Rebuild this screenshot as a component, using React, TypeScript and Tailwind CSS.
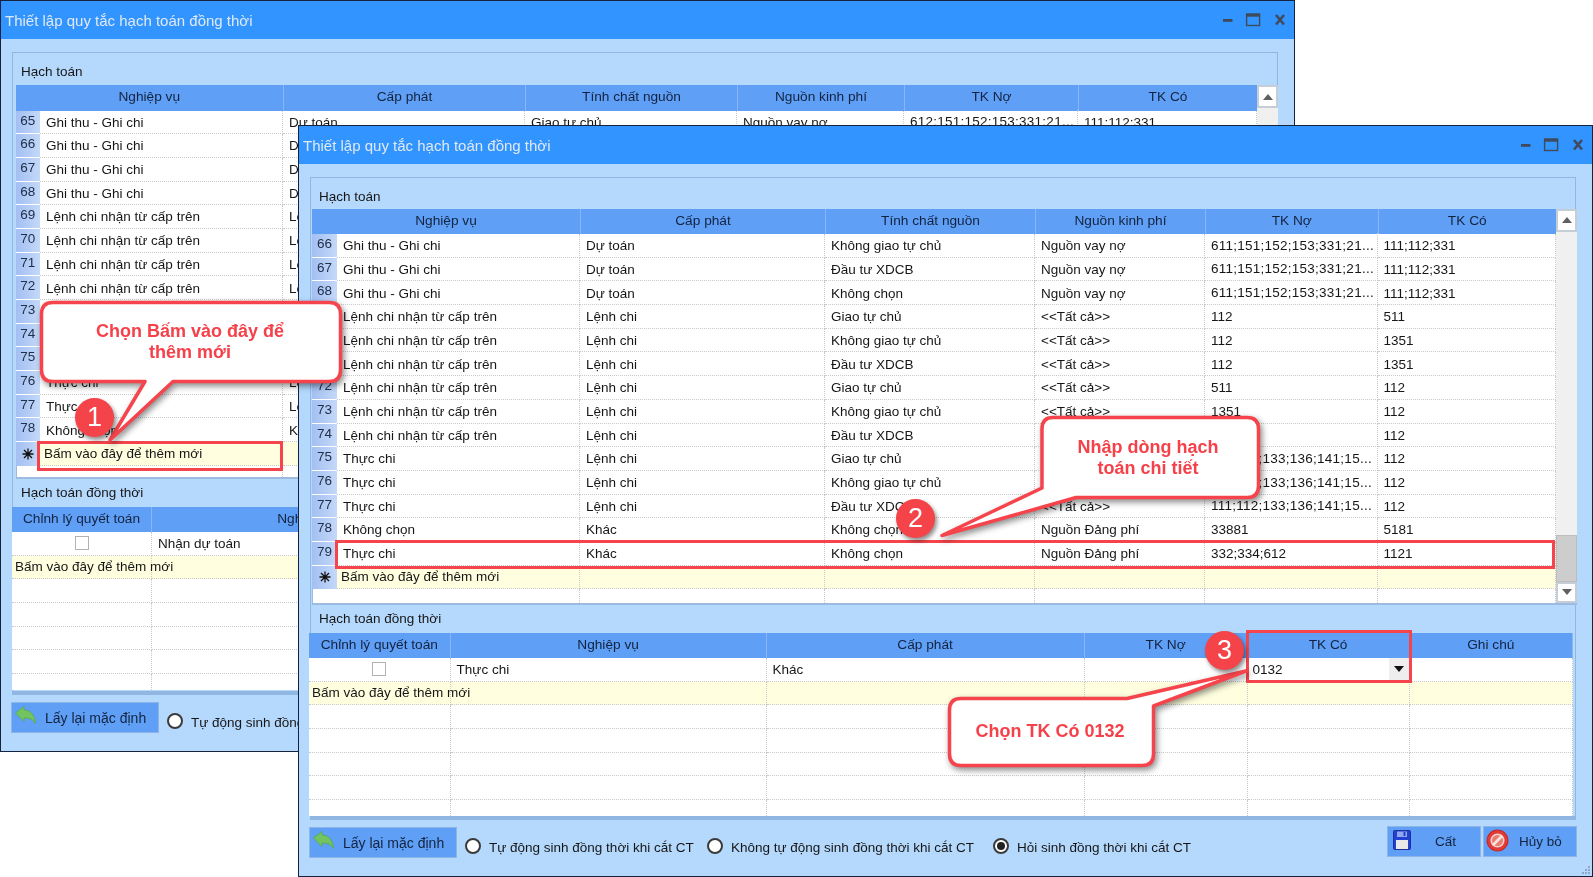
import React from "react";

type Row = [string, string, string, string, string, string, string];

const long1 = "611;151;152;153;331;21...";
const long2 = "111;112;133;136;141;15...";

const rowsFront: Row[] = [
  ["66", "Ghi thu - Ghi chi", "Dự toán", "Không giao tự chủ", "Nguồn vay nợ", long1, "111;112;331"],
  ["67", "Ghi thu - Ghi chi", "Dự toán", "Đầu tư XDCB", "Nguồn vay nợ", long1, "111;112;331"],
  ["68", "Ghi thu - Ghi chi", "Dự toán", "Không chọn", "Nguồn vay nợ", long1, "111;112;331"],
  ["69", "Lệnh chi nhận từ cấp trên", "Lệnh chi", "Giao tự chủ", "<<Tất cả>>", "112", "511"],
  ["70", "Lệnh chi nhận từ cấp trên", "Lệnh chi", "Không giao tự chủ", "<<Tất cả>>", "112", "1351"],
  ["71", "Lệnh chi nhận từ cấp trên", "Lệnh chi", "Đầu tư XDCB", "<<Tất cả>>", "112", "1351"],
  ["72", "Lệnh chi nhận từ cấp trên", "Lệnh chi", "Giao tự chủ", "<<Tất cả>>", "511", "112"],
  ["73", "Lệnh chi nhận từ cấp trên", "Lệnh chi", "Không giao tự chủ", "<<Tất cả>>", "1351", "112"],
  ["74", "Lệnh chi nhận từ cấp trên", "Lệnh chi", "Đầu tư XDCB", "<<Tất cả>>", "1351", "112"],
  ["75", "Thực chi", "Lệnh chi", "Giao tự chủ", "<<Tất cả>>", long2, "112"],
  ["76", "Thực chi", "Lệnh chi", "Không giao tự chủ", "<<Tất cả>>", long2, "112"],
  ["77", "Thực chi", "Lệnh chi", "Đầu tư XDCB", "<<Tất cả>>", long2, "112"],
  ["78", "Không chọn", "Khác", "Không chọn", "Nguồn Đảng phí", "33881", "5181"],
  ["79", "Thực chi", "Khác", "Không chọn", "Nguồn Đảng phí", "332;334;612", "1121"],
];

const rowsBack: Row[] = [
  ["65", "Ghi thu - Ghi chi", "Dự toán", "Giao tự chủ", "Nguồn vay nợ", "612;151;152;153;331;21...", "111;112;331"],
  ["66", "Ghi thu - Ghi chi", "Dự toán", "", "", "", ""],
  ["67", "Ghi thu - Ghi chi", "Dự toán", "", "", "", ""],
  ["68", "Ghi thu - Ghi chi", "Dự toán", "", "", "", ""],
  ["69", "Lệnh chi nhận từ cấp trên", "Lệnh chi", "", "", "", ""],
  ["70", "Lệnh chi nhận từ cấp trên", "Lệnh chi", "", "", "", ""],
  ["71", "Lệnh chi nhận từ cấp trên", "Lệnh chi", "", "", "", ""],
  ["72", "Lệnh chi nhận từ cấp trên", "Lệnh chi", "", "", "", ""],
  ["73", "Thực chi", "Lệnh chi", "", "", "", ""],
  ["74", "Thực chi", "Lệnh chi", "", "", "", ""],
  ["75", "Thực chi", "Lệnh chi", "", "", "", ""],
  ["76", "Thực chi", "Lệnh chi", "", "", "", ""],
  ["77", "Thực chi", "Lệnh chi", "", "", "", ""],
  ["78", "Không chọn", "Khác", "", "", "", ""],
];

const heads = ["Cấp phát", "Tính chất nguồn", "Nguồn kinh phí", "TK Nợ", "TK Có"];
const subHeads = ["Chỉnh lý quyết toán", "Nghiệp vụ", "Cấp phát", "TK Nợ", "TK Có", "Ghi chú"];

const cellLine = "border-r border-b border-dotted border-[#c9c9c9]";

function WindowButtons() {
  return (
    <svg width="63" height="14" viewBox="0 0 63 14" className="mt-[12px] mr-[8px] shrink-0">
      <rect x="0" y="6" width="9.5" height="2.8" fill="#3f4a5c" />
      <rect x="23.6" y="1.2" width="13" height="11.3" fill="none" stroke="#3f4a5c" strokeWidth="1.4" />
      <rect x="23" y="0.5" width="14" height="3.2" fill="#3f4a5c" />
      <path d="M53 2 L61 11.5 M61 2 L53 11.5" stroke="#3f4a5c" strokeWidth="2.6" />
    </svg>
  );
}

function Star() {
  return (
    <svg width="12" height="12" viewBox="0 0 12 12">
      <path d="M6 0.5V11.5M0.5 6H11.5M2 2L10 10M10 2L2 10" stroke="#111" strokeWidth="1.3" />
    </svg>
  );
}

function ScrollBar() {
  return (
    <div className="relative w-[21px] shrink-0 bg-[#f0f0f0] flex flex-col justify-between">
      <div className="h-[23px] bg-white border-2 border-[#c5cdd6] flex items-center justify-center">
        <svg width="10" height="6" viewBox="0 0 10 6"><path d="M5 0L10 6H0Z" fill="#606060" /></svg>
      </div>
      <div className="absolute left-0 right-0 bottom-[21px] h-[47px] bg-[#cdcdcd] border border-[#bdbdbd]" />
      <div className="h-[21px] bg-white border-2 border-[#c5cdd6] flex items-center justify-center">
        <svg width="10" height="6" viewBox="0 0 10 6"><path d="M0 0H10L5 6Z" fill="#606060" /></svg>
      </div>
    </div>
  );
}

function MainGrid({ cols, rows, box }: { cols: string; rows: Row[]; box: string }) {
  return (
    <div className={`flex ${box} bg-white border-b-2 border-[#9dbbe0]`}>
      <div className="flex-1 min-w-0 flex flex-col">
        <div className={`grid ${cols} h-[25.5px] shrink-0 bg-[#5f9ff6] text-[#13233f] text-[13.7px]`}>
          <div className="col-span-2 flex items-center justify-center">Nghiệp vụ</div>
          {heads.map((h) => (
            <div key={h} className="flex items-center justify-center border-l border-[#86b6f5]">{h}</div>
          ))}
        </div>
        {rows.map((r) => (
          <div key={r[0]} className={`grid ${cols} h-[23.7px] shrink-0`}>
            <div className="bg-linear-to-r from-[#a3bff2] to-[#c4d9f9] border-b border-white text-center leading-[20px] text-[#20304a]">{r[0]}</div>
            {r.slice(1).map((c, i) => (
              <div key={i} className={`${cellLine} flex items-center pl-[6px] pt-[2px] whitespace-nowrap overflow-hidden ${c.endsWith("...") ? "tracking-[0.25px] -mt-[1px]" : ""}`}>{c}</div>
            ))}
          </div>
        ))}
        <div className={`grid ${cols} h-[23.7px] shrink-0 bg-[#ffffe0]`}>
          <div className="bg-linear-to-r from-[#a3bff2] to-[#c4d9f9] flex items-center justify-center"><Star /></div>
          <div className={`${cellLine} flex items-center pl-[4px] pt-[1px] whitespace-nowrap`}>Bấm vào đây để thêm mới</div>
          <div className={cellLine} /><div className={cellLine} /><div className={cellLine} /><div className={cellLine} /><div className={cellLine} />
        </div>
        <div className={`grid ${cols} flex-1`}>
          <div className="border-l border-[#9dbbe0]" />
          <div className="border-r border-dotted border-[#c9c9c9]" /><div className="border-r border-dotted border-[#c9c9c9]" /><div className="border-r border-dotted border-[#c9c9c9]" /><div className="border-r border-dotted border-[#c9c9c9]" /><div className="border-r border-dotted border-[#c9c9c9]" /><div className="border-r border-dotted border-[#c9c9c9]" />
        </div>
      </div>
      <ScrollBar />
    </div>
  );
}

function SubGrid({ cols, box, name, cap, combo }: { cols: string; box: string; name: string; cap: string; combo: boolean }) {
  return (
    <div className={`${box} h-[183px] bg-white flex flex-col overflow-hidden`}>
      <div className={`grid ${cols} h-[25.5px] shrink-0 bg-[#5f9ff6] text-[#13233f] text-[13.7px]`}>
        {subHeads.map((h) => (
          <div key={h} className="flex items-center justify-center border-r border-[#86b6f5]">{h}</div>
        ))}
      </div>
      <div className={`grid ${cols} h-[23.7px] shrink-0`}>
        <div className={`${cellLine} flex items-center justify-center`}>
          <div className="w-[14px] h-[14px] bg-white border-[1.5px] border-[#b3b3b3]" />
        </div>
        <div className={`${cellLine} flex items-center pl-[6px] pt-[1px]`}>{name}</div>
        <div className={`${cellLine} flex items-center pl-[6px] pt-[1px]`}>{cap}</div>
        <div className={cellLine} />
        <div className={`${cellLine} flex items-center justify-between pl-[5px]`}>
          {combo && <span className="pt-[1px]">0132</span>}
          {combo && (
            <span className="w-[20px] h-full bg-[#eeeeee] flex items-center justify-center">
              <svg width="10" height="6" viewBox="0 0 10 6"><path d="M0 0H10L5 6Z" fill="#111" /></svg>
            </span>
          )}
        </div>
        <div className={cellLine} />
      </div>
      <div className={`grid ${cols} h-[23.7px] shrink-0 bg-[#ffffe0]`}>
        <div className={`${cellLine} flex items-center pl-[3px] pt-[1px] whitespace-nowrap`}>Bấm vào đây để thêm mới</div>
        <div className={cellLine} /><div className={cellLine} /><div className={cellLine} /><div className={cellLine} /><div className={cellLine} />
      </div>
      {[0, 1, 2, 3, 4].map((n) => (
        <div key={n} className={`grid ${cols} h-[23.7px] shrink-0`}>
          <div className={cellLine} /><div className={cellLine} /><div className={cellLine} /><div className={cellLine} /><div className={cellLine} /><div className={cellLine} />
        </div>
      ))}
    </div>
  );
}

function Radio({ on }: { on?: boolean }) {
  return (
    <span className="w-[16px] h-[16px] -mt-[3px] rounded-full bg-white border-2 border-[#3a3a3a] flex items-center justify-center shrink-0">
      {on && <span className="w-[8px] h-[8px] rounded-full bg-[#222]" />}
    </span>
  );
}

function Footer({ full }: { full: boolean }) {
  return (
    <div className="flex items-start mt-[7px] pl-[10px] pr-[15px]">
      <div className="w-[148px] h-[31px] bg-[#5f9ff6] border border-[#8db5e6] flex items-center shrink-0 text-[#13233f] text-[14px]">
        <svg width="21" height="18" viewBox="0 0 21 18" className="ml-[3px] mb-[4px]">
          <path d="M0.5 7L9 0.5V4C15.5 4 19.5 8.5 20.5 17.5C17.5 13 14 12 9 12V15.5Z" fill="#71c45f" stroke="#58a94f" strokeWidth="0.8" strokeLinejoin="round" />
        </svg>
        <span className="ml-[9px] pt-[3px] whitespace-nowrap">Lấy lại mặc định</span>
      </div>
      <div className="w-[242px] ml-[8px] mt-[11px] flex items-center gap-[8px] whitespace-nowrap shrink-0"><Radio /><span>Tự động sinh đồng thời khi cắt CT</span></div>
      {full && (
        <>
          <div className="w-[286px] mt-[11px] flex items-center gap-[8px] whitespace-nowrap shrink-0"><Radio /><span>Không tự động sinh đồng thời khi cắt CT</span></div>
          <div className="mt-[11px] flex items-center gap-[8px] whitespace-nowrap shrink-0"><Radio on /><span>Hỏi sinh đồng thời khi cắt CT</span></div>
          <div className="ml-auto flex gap-[2px] -mt-[1px] shrink-0 text-[#13233f]">
            <div className="w-[94px] h-[31px] bg-[#5f9ff6] border border-[#8db5e6] flex items-center">
              <svg width="18" height="20" viewBox="0 0 18 20" className="ml-[5px] mb-[3px]">
                <rect x="0.5" y="0.5" width="17" height="19" rx="1" fill="#2340d0" stroke="#1c2fa0" />
                <rect x="4" y="1.5" width="10" height="5.5" fill="#8fa8ee" />
                <rect x="10.5" y="2" width="2" height="4" fill="#2340d0" />
                <rect x="3" y="10" width="12" height="9" fill="#e8e8e8" />
              </svg>
              <span className="ml-[24px] pt-[2px]">Cất</span>
            </div>
            <div className="w-[94px] h-[31px] bg-[#5f9ff6] border border-[#8db5e6] flex items-center">
              <svg width="23" height="23" viewBox="0 0 22 22" className="ml-[2px] mb-[2px]">
                <circle cx="11" cy="11" r="10" fill="#e23a36" stroke="#c22a2a" />
                <circle cx="11" cy="11" r="6" fill="#e97b70" stroke="#f4d4cc" strokeWidth="1.5" />
                <path d="M6.5 15.5L15.5 6.5" stroke="#f8e2dc" strokeWidth="2.6" />
              </svg>
              <span className="ml-[10px] pt-[2px] whitespace-nowrap">Hủy bỏ</span>
            </div>
          </div>
        </>
      )}
    </div>
  );
}

function Win(props: {
  pos: string; labelH: string; cols: string; subCols: string; rows: Row[]; gridBox: string; subBox: string;
  name: string; cap: string; combo: boolean; groupPb: string; full: boolean;
}) {
  return (
    <div className={`absolute ${props.pos} w-[1295px] h-[752px] box-border border-[1.5px] border-[#15233c] bg-[#b5d9fd] flex flex-col`}>
      <div className="h-[37.5px] shrink-0 bg-[#3294fe] flex justify-between">
        <span className="pl-[4px] pt-[11px] text-[15px] leading-[18px] text-[#dfe9f5]">Thiết lập quy tắc hạch toán đồng thời</span>
        <WindowButtons />
      </div>
      <div className={`mt-[13px] ml-[11px] mr-[16px] border-x border-t border-b-4 border-[#90b6e2] ${props.groupPb}`}>
        <div className={`${props.labelH} pl-[8px] pt-[10px] leading-[18px]`}>Hạch toán</div>
        <MainGrid cols={props.cols} rows={props.rows} box={props.gridBox} />
        <div className="h-[28px] pl-[8px] pt-[5px] leading-[18px]">Hạch toán đồng thời</div>
        <SubGrid cols={props.subCols} box={props.subBox} name={props.name} cap={props.cap} combo={props.combo} />
      </div>
      <Footer full={props.full} />
      <svg width="10" height="10" viewBox="0 0 10 10" className="absolute right-[1px] bottom-[1px]">
        <g fill="#90a8c8"><rect x="7" y="1" width="2" height="2" /><rect x="4" y="4" width="2" height="2" /><rect x="7" y="4" width="2" height="2" /><rect x="1" y="7" width="2" height="2" /><rect x="4" y="7" width="2" height="2" /><rect x="7" y="7" width="2" height="2" /></g>
      </svg>
    </div>
  );
}

function Num({ pos, n }: { pos: string; n: string }) {
  return (
    <div className={`absolute ${pos} w-[39px] h-[39px] rounded-full bg-[#f4444a] text-white text-[27px] flex items-center justify-center shadow-[2px_3px_4px_rgba(0,0,0,0.45)]`}>{n}</div>
  );
}

const calloutText = "absolute text-center font-bold text-[#f5414a] text-[18px] leading-[21px] whitespace-nowrap -translate-x-1/2";

export default function App() {
  return (
    <div className="relative w-[1593px] h-[877px] overflow-hidden bg-white text-[13.5px] text-[#161616] blur-[0.35px]" style={{ fontFamily: '"Liberation Sans", Arial, sans-serif' }}>
      <Win
        pos="left-0 top-0"
        labelH="h-[32.5px]"
        cols="grid-cols-[24.5px_243px_242px_212px_167px_174px_179px]"
        subCols="grid-cols-[140px_313px_318px_163px_162px_168px]"
        rows={rowsBack}
        gridBox="ml-[2.5px] w-[1262.5px] h-[393.5px]"
        subBox="-ml-[1px] w-[1264px]"
        name="Nhận dự toán"
        cap=""
        combo={false}
        groupPb="pb-[1px]"
        full={false}
      />
      <Win
        pos="left-[298px] top-[125px]"
        labelH="h-[31px]"
        cols="grid-cols-[25px_243px_245px_210px_170px_172.5px_178.5px]"
        subCols="grid-cols-[141.6px_316px_318px_163px_162px_163.4px]"
        rows={rowsFront}
        gridBox="ml-[1px] w-[1265px] h-[396px]"
        subBox="-ml-[2px] w-[1264px]"
        name="Thực chi"
        cap="Khác"
        combo
        groupPb="pb-[0px]"
        full
      />

      <div className="absolute left-[37px] top-[441px] w-[246px] h-[30px] border-[3.5px] border-[#f5444c]" />
      <div className="absolute left-[335px] top-[540px] w-[1220px] h-[28.5px] border-[3.5px] border-[#f5444c]" />
      <div className="absolute left-[1246px] top-[630px] w-[166px] h-[53px] border-[3.5px] border-[#f5444c]" />

      <svg width="1593" height="877" viewBox="0 0 1593 877" className="absolute left-0 top-0 drop-shadow-[2px_3px_3px_rgba(0,0,0,0.45)]">
        <g fill="#ffffff" stroke="#f5444c" strokeWidth="3.5" strokeLinejoin="round">
          <path d="M53 302.5H329Q340.5 302.5 340.5 314V370Q340.5 381.5 329 381.5H173L110 440L145 381.5H53Q41.5 381.5 41.5 370V314Q41.5 302.5 53 302.5Z" />
          <path d="M1053 417.5H1247Q1258.5 417.5 1258.5 429V486Q1258.5 497.5 1247 497.5H1076L942 535.5L1042 488V429Q1042 417.5 1053 417.5Z" />
          <path d="M961 698.5H1127L1246 671L1153.5 706V754Q1153.5 765.5 1142 765.5H961Q949.5 765.5 949.5 754V710Q949.5 698.5 961 698.5Z" />
        </g>
      </svg>

      <div className={`${calloutText} left-[190px] top-[321px]`}>Chọn Bấm vào đây để<br />thêm mới</div>
      <div className={`${calloutText} left-[1148px] top-[437px]`}>Nhập dòng hạch<br />toán chi tiết</div>
      <div className={`${calloutText} left-[1050px] top-[721px]`}>Chọn TK Có 0132</div>

      <Num pos="left-[75px] top-[398px]" n="1" />
      <Num pos="left-[896px] top-[499px]" n="2" />
      <Num pos="left-[1205px] top-[631px]" n="3" />
    </div>
  );
}
